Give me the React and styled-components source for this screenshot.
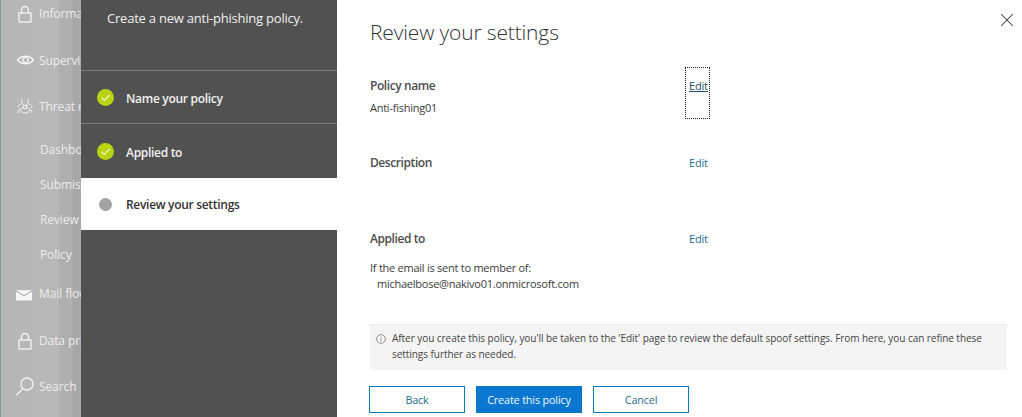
import React from "react";
import styled, { createGlobalStyle } from "styled-components";

const Global = createGlobalStyle`
  html, body { margin: 0; padding: 0; background: #fff; }
  #root { width: 1022px; height: 417px; overflow: hidden; }
  * { box-sizing: border-box; }
`;
const FONT = `"Open Sans", "Noto Sans", "Liberation Sans", sans-serif`;

const Page = styled.div`
  display: grid;
  grid-template-columns: 81px 256px 685px;
  height: 417px;
  font-family: ${FONT};
  overflow: hidden;
`;
const Nav = styled.nav`
  overflow: hidden;
  white-space: nowrap;
  padding: 3px 0 0 1px;
  background: linear-gradient(90deg, #7f9a90 0, #7f9a90 1px, #b6b6b6 1px, #b8b8b8 58px, #aeaeae 60px, #b0b0b0 72px, #a6a6a6 73px, #a8a8a8 81px);
`;
const NavRow = styled.div`
  display: flex;
  align-items: center;
  height: 20px;
  margin-top: ${p => p.$gap || 0}px;
  padding-left: ${p => (p.$sub ? 39 : 13)}px;
  color: #ececec;
  font-size: 12px;
  letter-spacing: -0.1px;
`;
const NavIcon = styled.svg`
  width: 20px;
  height: 20px;
  flex: none;
  margin-right: 5px;
  fill: none;
  stroke: #f4f4f4;
  stroke-width: 1.3;
`;
const BioIcon = styled(NavIcon)`
  stroke-width: 1;
`;
const MailIcon = styled(NavIcon)`
  width: 16px;
  margin-left: 2px;
  margin-right: 7px;
  position: relative;
  top: 2px;
  stroke: none;
  fill: #f7f7f7;
`;
const Wizard = styled.aside`
  background: #515151;
  color: #fff;
  display: flex;
  flex-direction: column;
`;
const WizardHead = styled.div`
  height: 71px;
  padding: 8px 0 0 26px;
  font-size: 13px;
  line-height: 20px;
  letter-spacing: -0.22px;
  color: #f0f0f0;
  border-bottom: 1px solid #7c7c7c;
`;
const Step = styled.div`
  display: flex;
  align-items: center;
  gap: 12px;
  height: ${p => p.$h}px;
  padding: 0 0 0 16px;
  font-size: 12px;
  font-weight: 600;
  letter-spacing: -0.3px;
  background: ${p => (p.$active ? "#fff" : "transparent")};
  color: ${p => (p.$active ? "#333" : "#f2f2f2")};
  border-bottom: ${p => (p.$line ? "1px solid #7c7c7c" : "none")};
`;
const StepText = styled.span`
  position: relative;
  top: ${p => p.$nudge || 0}px;
`;
const CheckDot = styled.svg`
  width: 17px;
  height: 17px;
  flex: none;
`;
const GreyDot = styled.span`
  width: 13px;
  height: 13px;
  margin: 0 2px;
  flex: none;
  border-radius: 50%;
  background: #a3a3a3;
`;
const Main = styled.main`
  position: relative;
  padding: 18px 15px 0 33px;
  color: #333;
`;
const Close = styled.svg`
  position: absolute;
  top: 14px;
  right: 9px;
  width: 12px;
  height: 12px;
  stroke: #555;
  stroke-width: 1.1;
`;
const Title = styled.h1`
  margin: 0;
  height: 50px;
  font-size: 21px;
  line-height: 28px;
  font-weight: 300;
  letter-spacing: -0.15px;
  color: #333;
`;
const Section = styled.section`
  width: 339px;
  height: ${p => p.$h}px;
`;
const SectionHead = styled.div`
  display: flex;
  justify-content: space-between;
  align-items: flex-start;
`;
const Label = styled.h2`
  margin: 0;
  padding-top: ${p => p.$pt || 0}px;
  font-size: 12px;
  line-height: 18px;
  font-weight: 600;
  letter-spacing: -0.42px;
  color: #4c4c4c;
`;
const EditLink = styled.a`
  display: block;
  width: 23px;
  height: ${p => (p.$focus ? 50 : 18)}px;
  padding: ${p => (p.$focus ? "9px 0 0 3px" : "0 0 0 3px")};
  font-size: 11px;
  line-height: 18px;
  letter-spacing: -0.2px;
  color: ${p => (p.$focus ? "#1e4b63" : "#1f6d8f")};
  text-decoration: ${p => (p.$focus ? "underline" : "none")};
  outline: ${p => (p.$focus ? "1px dotted #222" : "none")};
`;
const Value = styled.div`
  font-size: 11px;
  line-height: 16px;
  letter-spacing: -0.25px;
  color: #3c3c3c;
  margin-top: ${p => p.$mt || 0}px;
  padding-left: ${p => p.$indent || 0}px;
`;
const Notice = styled.div`
  display: flex;
  gap: 6px;
  width: 637px;
  height: 46px;
  margin-top: 22px;
  padding: 6px 10px 0 6px;
  background: #f4f4f4;
  border-top: 1px solid #ececec;
  font-size: 10px;
  line-height: 15.5px;
  letter-spacing: -0.05px;
  color: #444;
`;
const InfoIcon = styled.svg`
  width: 10px;
  height: 10px;
  flex: none;
  margin-top: 3px;
  fill: none;
  stroke: #777;
  stroke-width: 0.8;
`;
const Actions = styled.div`
  display: flex;
  gap: 11px;
  margin: 16px 0 0 -1px;
`;
const Button = styled.button`
  width: ${p => p.$w}px;
  height: 27px;
  padding: 0;
  border: 1px solid #0b78bd;
  border-radius: 0;
  font-family: ${FONT};
  font-size: 10.8px;
  letter-spacing: -0.15px;
  background: ${p => (p.$primary ? "#0a78d0" : "#fff")};
  color: ${p => (p.$primary ? "#f2f8fc" : "#1f6d8f")};
`;

const Lock = () => (
  <NavIcon viewBox="0 0 20 20">
    <rect x="5" y="10" width="12" height="9" />
    <path d="M7.5 10V7a3.5 3.5 0 0 1 7 0v3" />
  </NavIcon>
);
const Eye = () => (
  <NavIcon viewBox="0 0 20 20">
    <path d="M3.5 10c4-5 12-5 16 0-4 5-12 5-16 0z" />
    <circle cx="11.5" cy="10" r="2.6" />
  </NavIcon>
);
const Bio = () => (
  <BioIcon viewBox="0 0 20 20">
    <circle cx="11" cy="11" r="1.8" />
    <path d="M8 3c-1 3 0 6 3 7 3-1 4-4 3-7M4 17c0-3 2-5 6-5M18 17c0-3-2-5-6-5M6 14c2 4 8 4 10 0M7 8c-2 1-3 2-3 4M15 8c2 1 3 2 3 4" />
  </BioIcon>
);
const Mail = () => (
  <MailIcon viewBox="0 0 20 20">
    <path d="M0 4h20L10 10zM0 6l10 6 10-6v11H0z" />
  </MailIcon>
);
const SearchI = () => (
  <NavIcon viewBox="0 0 20 20">
    <circle cx="13" cy="8" r="6" />
    <path d="M9 12.5 2.5 19" />
  </NavIcon>
);
const Check = () => (
  <CheckDot viewBox="0 0 17 17">
    <circle cx="8.5" cy="8.5" r="8.5" fill="#b7d312" />
    <path d="M4.5 8.8 7.4 11.5 12.6 6" fill="none" stroke="#eef5c0" strokeWidth="1.2" />
  </CheckDot>
);

export default function App() {
  return (
    <>
      <Global />
      <Page>
        <Nav>
          <NavRow><Lock />Information governance</NavRow>
          <NavRow $gap={27}><Eye />Supervision</NavRow>
          <NavRow $gap={26}><Bio />Threat management</NavRow>
          <NavRow $gap={23} $sub>Dashboard</NavRow>
          <NavRow $gap={15} $sub>Submissions</NavRow>
          <NavRow $gap={15} $sub>Review</NavRow>
          <NavRow $gap={15} $sub>Policy</NavRow>
          <NavRow $gap={19}><Mail />Mail flow</NavRow>
          <NavRow $gap={27}><Lock />Data privacy</NavRow>
          <NavRow $gap={26}><SearchI />Search</NavRow>
        </Nav>
        <Wizard>
          <WizardHead>Create a new anti-phishing policy.</WizardHead>
          <Step $h={53} $line><Check /><StepText $nudge={1}>Name your policy</StepText></Step>
          <Step $h={54}><Check /><StepText $nudge={1}>Applied to</StepText></Step>
          <Step $h={52} $active><GreyDot /><StepText>Review your settings</StepText></Step>
        </Wizard>
        <Main>
          <Close viewBox="0 0 12 12"><path d="M0 0 12 12M12 0 0 12" /></Close>
          <Title>Review your settings</Title>
          <Section $h={86}>
            <SectionHead>
              <Label $pt={9}>Policy name</Label>
              <EditLink $focus>Edit</EditLink>
            </SectionHead>
            <Value $mt={-18}>Anti-fishing01</Value>
          </Section>
          <Section $h={76}>
            <SectionHead>
              <Label>Description</Label>
              <EditLink>Edit</EditLink>
            </SectionHead>
          </Section>
          <Section $h={72}>
            <SectionHead>
              <Label>Applied to</Label>
              <EditLink>Edit</EditLink>
            </SectionHead>
            <Value $mt={12}>If the email is sent to member of:</Value>
            <Value $indent={7}>michaelbose@nakivo01.onmicrosoft.com</Value>
          </Section>
          <Notice>
            <InfoIcon viewBox="0 0 10 10">
              <circle cx="5" cy="5" r="4.4" />
              <path d="M5 4.4v3M5 2.6v.9" />
            </InfoIcon>
            <span>After you create this policy, you'll be taken to the 'Edit' page to review the default spoof settings. From here, you can refine these settings further as needed.</span>
          </Notice>
          <Actions>
            <Button $w={96}>Back</Button>
            <Button $w={106} $primary>Create this policy</Button>
            <Button $w={96}>Cancel</Button>
          </Actions>
        </Main>
      </Page>
    </>
  );
}
